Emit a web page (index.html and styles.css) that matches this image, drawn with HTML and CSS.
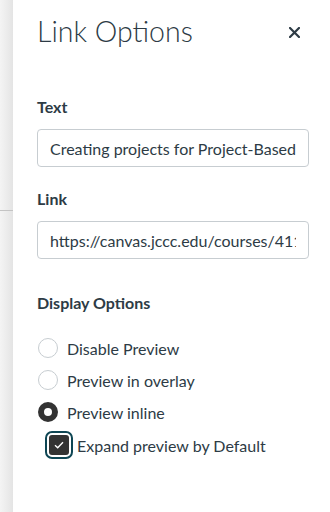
FILE: index.html
```html
<!DOCTYPE html>
<html lang="en">
<head>
    <meta charset="UTF-8">
    <title>Link Options</title>
    <link rel="stylesheet" href="styles.css">
</head>
<body>
    <div id="page">
        <div class="backdrop">
            <div class="backdrop-row"></div>
        </div>
        <div class="tray">
            <div class="tray-header">
                <h2>Link Options</h2>
                <button class="close" aria-label="Close">
                    <svg width="11" height="11" viewBox="0 0 11 11">
                        <path d="M1 1 L10 10 M10 1 L1 10" stroke="#2d3b45" stroke-width="2.2" stroke-linecap="square"/>
                    </svg>
                </button>
            </div>

            <div class="fields">
                <div class="field">
                    <label for="linkText">Text</label>
                    <input type="text" id="linkText" value="Creating projects for Project-Based Learning">
                </div>
                <div class="field">
                    <label for="linkHref">Link</label>
                    <input type="text" id="linkHref" value="https://canvas.jccc.edu/courses/41123/pages/creating-projects">
                </div>
            </div>

            <div class="display">
                <div class="display-title">Display Options</div>
                <div class="option">
                    <span class="radio"></span>
                    <span>Disable Preview</span>
                </div>
                <div class="option">
                    <span class="radio"></span>
                    <span>Preview in overlay</span>
                </div>
                <div class="option">
                    <span class="radio checked"></span>
                    <span>Preview inline</span>
                </div>
                <div class="option sub">
                    <span class="checkbox">
                        <svg width="12" height="10" viewBox="0 0 12 10">
                            <path d="M2 5.3 L4.7 7.8 L10 2.2" fill="none" stroke="#fff" stroke-width="1.4"/>
                        </svg>
                    </span>
                    <span>Expand preview by Default</span>
                </div>
            </div>
        </div>
    </div>
</body>
</html>
```

FILE: styles.css
```css
body{
    margin: 0;
    font-family: Lato, "Noto Sans", sans-serif;
    color: #2d3b45;
    background: #fff;
}
#page{
    display: flex;
    width: 330px;
    height: 512px;
    overflow: hidden;
}
.backdrop{
    width: 13px;
    flex-shrink: 0;
    background: linear-gradient(to right, #f4f4f4, #e4e4e4);
    .backdrop-row{
        height: 210px;
        border-bottom: 1px solid #c4c4c4;
    }
}
.tray{
    flex: 1;
    padding: 0 21px 0 24px;
    background: #fff;
}
.tray-header{
    display: flex;
    align-items: center;
    justify-content: space-between;
    padding-top: 14px;
    h2{
        margin: 0;
        font-size: 28.5px;
        font-weight: 300;
        line-height: 35px;
    }
    .close{
        border: none;
        background: none;
        padding: 0;
        margin-right: 9px;
        margin-top: 2px;
        display: flex;
    }
}
.fields{
    display: flex;
    flex-direction: column;
    gap: 20px;
    margin-top: 46px;
}
.field{
    display: flex;
    flex-direction: column;
    gap: 10px;
    label{
        font-size: 16px;
        font-weight: 700;
        line-height: 24px;
    }
    input{
        box-sizing: border-box;
        height: 38px;
        width: 100%;
        border: 1px solid #c7cdd1;
        border-radius: 4px;
        padding: 0 12px;
        font-family: Lato, "Noto Sans", sans-serif;
        font-size: 16px;
        color: #2d3b45;
        outline: none;
    }
}
.display{
    margin-top: 32px;
    .display-title{
        font-size: 16px;
        font-weight: 700;
        line-height: 24px;
        margin-bottom: 17px;
    }
}
.option{
    display: flex;
    align-items: center;
    gap: 9px;
    height: 32px;
    font-size: 16px;
    padding-left: 1px;
    .radio{
        box-sizing: border-box;
        width: 20px;
        height: 20px;
        border-radius: 50%;
        border: 1px solid #c7cdd1;
        background: #fff;
    }
    .radio.checked{
        border: 6px solid #333;
    }
}
.option.sub{
    padding-left: 12px;
    gap: 8px;
    height: 34px;
    .checkbox{
        box-sizing: border-box;
        width: 20px;
        height: 20px;
        border-radius: 3px;
        background: #333;
        display: flex;
        align-items: center;
        justify-content: center;
        outline: 2px solid #0e4654;
        outline-offset: 2px;
    }
}
```
